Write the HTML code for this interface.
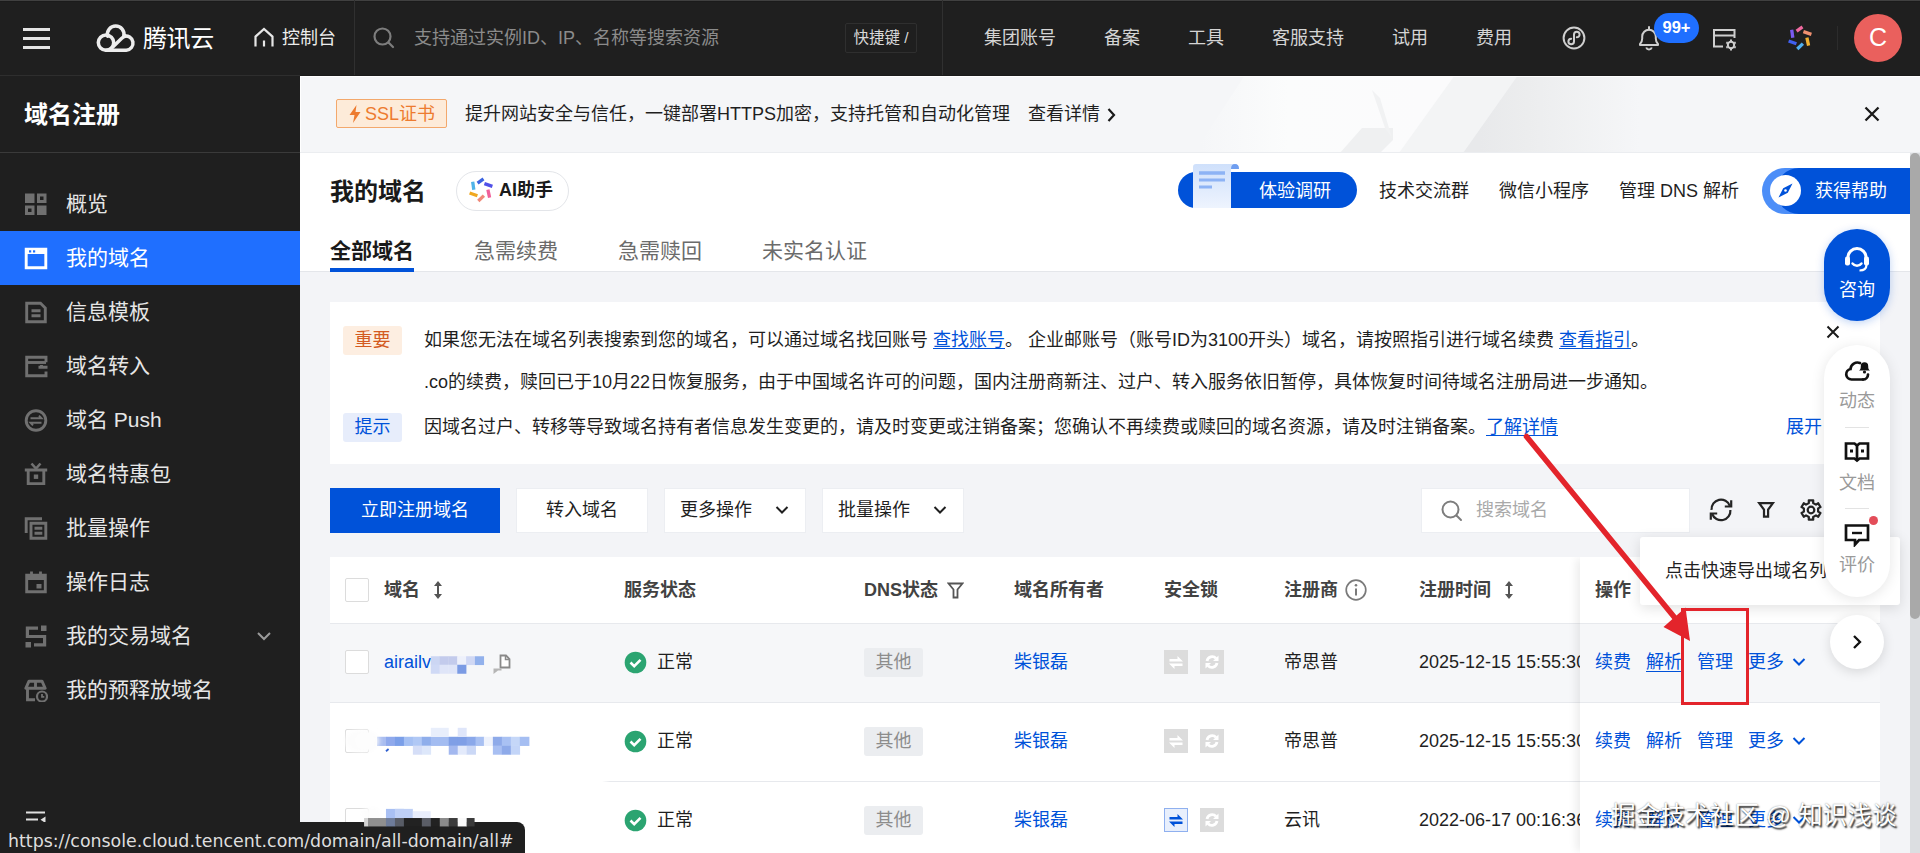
<!DOCTYPE html>
<html lang="zh-CN">
<head>
<meta charset="utf-8">
<title>域名注册 - 我的域名</title>
<style>
*{box-sizing:border-box;margin:0;padding:0}
html,body{width:1920px;height:853px;overflow:hidden;background:#f3f4f7}
body{font-family:"Liberation Sans","Noto Sans CJK SC",sans-serif;font-size:18px;color:#1f1f1f;position:relative}
.abs{position:absolute}
a{color:#0052d9;text-decoration:none}
svg{display:block}
/* ---------- top bar ---------- */
#top{position:absolute;left:0;top:0;width:1920px;height:75px;background:#1f1f1f;color:#d6d6d6;z-index:50}
#top .t{position:absolute;top:1px;line-height:75px;font-size:18px;white-space:nowrap;color:#d4d4d4}
/* ---------- sidebar ---------- */
#side{position:absolute;left:0;top:75px;width:300px;height:778px;background:#1f1f1f;color:#e8e8e8;z-index:40}
#side .ttl{position:absolute;left:24px;top:1px;height:77px;line-height:77px;font-size:24px;font-weight:bold;color:#fff}
#side .ln{position:absolute;left:0;width:300px;height:1px;background:#3a3a3a}
#side .mi{position:absolute;left:0;width:300px;height:54px;line-height:54px;font-size:21px;color:#e6e6e6;padding-left:66px;white-space:nowrap}
#side .mi.on{background:#1f6fff;color:#fff}
#side .mi svg{position:absolute;left:24px;top:15px}
/* ---------- main ---------- */
#main{position:absolute;left:300px;top:75px;width:1610px;height:778px;background:#f3f4f7;overflow:hidden}

/* banner */
#banner{position:absolute;left:300px;top:75px;width:1620px;height:78px;background:#f5f6f8;border-bottom:1px solid #ebedf0;overflow:hidden;z-index:5}
#hdr{position:absolute;left:300px;top:153px;width:1610px;height:119px;background:#fff;border-bottom:1px solid #e4e6ea;z-index:4}
.tab{position:absolute;top:78px;font-size:21px;line-height:40px;color:#6b6b6b;white-space:nowrap}
.tab.on{color:#1a1a1a;font-weight:bold}
.hl{position:absolute;top:18px;line-height:40px;font-size:18px;color:#1f1f1f;white-space:nowrap}

/* notice card */
#notice{position:absolute;left:330px;top:302px;width:1550px;height:162px;background:#fff;z-index:3}
.tag{position:absolute;left:13px;width:59px;height:29px;line-height:29px;text-align:center;font-size:18px;border-radius:3px}
.nt{position:absolute;left:94px;line-height:30px;font-size:18px;color:#1f1f1f;white-space:nowrap}
.nt a{text-decoration:underline;text-underline-offset:2px}
/* toolbar */
.btn{position:absolute;top:488px;height:45px;line-height:43px;font-size:18px;text-align:center;background:#fff;border:1px solid #eceef2;color:#1f1f1f;white-space:nowrap;z-index:3}
/* table */
#tbl{position:absolute;left:330px;top:557px;width:1550px;height:296px;background:#fff;z-index:3;overflow:hidden}
.th{position:absolute;top:0;height:66px;line-height:66px;font-weight:bold;font-size:18px;color:#424242;white-space:nowrap}
.row{position:absolute;left:0;width:1550px;height:79px;border-top:1px solid #e7e9ed}
.td{position:absolute;top:0;height:78px;line-height:76px;font-size:18px;color:#1f1f1f;white-space:nowrap}
.cb{position:absolute;left:15px;width:24px;height:24px;border:1px solid #dcdcdc;background:#fff;border-radius:2px}
.pill{position:absolute;left:534px;top:24px;width:59px;height:29px;line-height:28px;background:#ebedf0;color:#8c8c8c;font-size:18px;text-align:center;border-radius:3px}

#fix{position:absolute;left:1250px;top:0;width:300px;height:296px;background:#fff;box-shadow:-6px 0 8px -2px rgba(0,0,0,0.070)}
</style>
</head>
<body>

<!-- ================= TOP BAR ================= -->
<div id="top">
  <div class="abs" style="left:0;top:0;width:1920px;height:1px;background:#404040"></div><div class="abs" style="left:0;top:1px;width:1920px;height:1px;background:#1b1b1b"></div>
  <!-- hamburger -->
  <div class="abs" style="left:23px;top:28px;width:27px;height:3px;background:#e4e4e4"></div>
  <div class="abs" style="left:23px;top:37px;width:27px;height:3px;background:#e4e4e4"></div>
  <div class="abs" style="left:23px;top:46px;width:27px;height:3px;background:#e4e4e4"></div>
  <!-- cloud logo -->
  <svg class="abs" style="left:95px;top:22px" width="42" height="32" viewBox="95 22 42 32">
    <g fill="none" stroke="#ececec" stroke-width="3.500" stroke-linecap="round" stroke-linejoin="round">
      <circle cx="106" cy="42.600" r="7.700"/>
      <path d="M107.600 36.200 A8.300 8.300 0 1 1 123.800 36.200 A7.200 7.200 0 1 1 126.300 50.300 H106"/>
      <path d="M111.500 48.200 L121.500 38.600 c1.300 -1.200 2.300 -2 3.600 -2.300"/>
    </g>
  </svg>
  <div class="t" style="left:143px;font-size:24px;color:#fff;letter-spacing:-0.4px">腾讯云</div>
  <!-- home -->
  <svg class="abs" style="left:253px;top:27px" width="22" height="21" viewBox="0 0 22 21">
    <path d="M2.5 19.5 V9.6 L11 2 L19.5 9.6 V19.5" fill="none" stroke="#e6e6e6" stroke-width="2.2" stroke-linejoin="miter"/>
    <path d="M11 13.5 V19.5" stroke="#e6e6e6" stroke-width="2.2"/>
  </svg>
  <div class="t" style="left:282px;color:#ececec">控制台</div>
  <div class="abs" style="left:354px;top:0;width:1px;height:75px;background:#303030"></div>
  <!-- search -->
  <svg class="abs" style="left:372px;top:26px" width="24" height="24" viewBox="0 0 24 24">
    <circle cx="10.5" cy="10.5" r="8" fill="none" stroke="#7d7d7d" stroke-width="2.2"/>
    <path d="M16.5 16.5 L21 21" stroke="#7d7d7d" stroke-width="2.2" stroke-linecap="round"/>
  </svg>
  <div class="t" style="left:414px;color:#8b8b8b">支持通过实例ID、IP、名称等搜索资源</div>
  <div class="abs" style="left:845px;top:23px;width:72px;height:30px;border:1px solid #2f2f2f;border-radius:2px;font-size:15.5px;line-height:27px;text-align:center;color:#d8d8d8;white-space:nowrap">快捷键 /</div>
  <div class="abs" style="left:942px;top:0;width:1px;height:75px;background:#303030"></div>
  <div class="t" style="left:984px">集团账号</div>
  <div class="t" style="left:1104px">备案</div>
  <div class="t" style="left:1188px">工具</div>
  <div class="t" style="left:1272px">客服支持</div>
  <div class="t" style="left:1392px">试用</div>
  <div class="t" style="left:1476px">费用</div>
  <!-- mini program icon -->
  <svg class="abs" style="left:1561px;top:25px" width="26" height="26" viewBox="0 0 26 26">
    <circle cx="13" cy="13" r="10.400" fill="none" stroke="#cfcfcf" stroke-width="2"/>
    <path d="M13 16.5 a2.8 2.8 0 1 1 -2.8 -2.8 M13 16.5 V9.5 a2.8 2.8 0 1 1 2.8 2.8" fill="none" stroke="#cfcfcf" stroke-width="2" stroke-linecap="round"/>
  </svg>
  <!-- bell -->
  <svg class="abs" style="left:1637px;top:25px" width="24" height="27" viewBox="0 0 24 27">
    <path d="M3 20 V19 c1.6 -1.4 2.2 -3 2.2 -5.5 V11.5 a6.8 6.8 0 0 1 13.6 0 V13.5 c0 2.500 0.600 4.100 2.200 5.500 V20 Z" fill="none" stroke="#cfcfcf" stroke-width="2" stroke-linejoin="round"/>
    <path d="M9.200 22.500 a3 3 0 0 0 5.600 0" fill="none" stroke="#cfcfcf" stroke-width="2"/>
    <path d="M12 2 V4.500" stroke="#cfcfcf" stroke-width="2" stroke-linecap="round"/>
  </svg>
  <div class="abs" style="left:1654px;top:13px;width:45px;height:30px;border-radius:15px;background:#1f6fff;color:#fff;font-weight:bold;font-size:16.5px;line-height:29px;text-align:center">99+</div>
  <!-- billing icon -->
  <svg class="abs" style="left:1712px;top:27px" width="26" height="24" viewBox="0 0 26 24">
    <path d="M11 19.500 H2 V3 H22.500 V11" fill="none" stroke="#cfcfcf" stroke-width="2"/>
    <path d="M2 8.500 H22.500" stroke="#cfcfcf" stroke-width="2"/>
    <circle cx="19" cy="18" r="3.200" fill="none" stroke="#cfcfcf" stroke-width="2"/>
    <path d="M19 12.600 V14 M19 22 V23.400 M14.300 15.300 L15.600 16 M22.400 20 L23.700 20.700 M14.300 20.700 L15.600 20 M22.400 16 L23.700 15.300" stroke="#cfcfcf" stroke-width="2"/>
  </svg>
  <!-- AI colourful icon -->
  <svg class="abs" style="left:1785.5px;top:24px" width="28" height="28" viewBox="-14 -14 28 28"><g fill="none" stroke-width="3.300" stroke-linecap="butt"><path d="M-8.300 -8.300L-7.200 -0.300" stroke="#7a5af0"/><path d="M-3.400 -6.900L2.500 -11.100" stroke="#f06aa0"/><path d="M3.400 -6.400L11.400 -3.600" stroke="#f09070"/><path d="M6.900 -0.300L8.600 7.700" stroke="#f0b030"/><path d="M2.900 5.600L-2.700 11.000" stroke="#50b0f0"/><path d="M-3.600 5.800L-11.400 3.000" stroke="#4060f0"/></g></svg>
  <div class="abs" style="left:1837px;top:26px;width:1px;height:24px;background:#2c2c2c"></div>
  <div class="abs" style="left:1854px;top:14px;width:48px;height:48px;border-radius:24px;background:#ea605d;color:#fff;font-size:25px;line-height:46px;text-align:center">C</div>
</div>

<!-- ================= SIDEBAR ================= -->
<div id="side">
  <div class="ln" style="top:0;background:#2e2e2e"></div>
  <div class="ttl">域名注册</div>
  <div class="ln" style="top:77px"></div>
  <div class="mi" style="top:102px"><svg width="24" height="24" viewBox="0 0 24 24" fill="none" stroke="#707070" stroke-width="2.900"><g stroke="none" fill="#707070"><rect x="1" y="1.500" width="9.500" height="9.500"/><path fill-rule="evenodd" d="M13 1.500h9.500v9.500H13z M16 4.500v3.500h3.500V4.500z"/><path fill-rule="evenodd" d="M1 13.500h9.500v9.500H1z M4 16.500v3.500h3.500v-3.500z"/><rect x="13" y="13.500" width="9.500" height="9.500"/></g></svg>概览</div>
  <div class="mi on" style="top:156px"><svg width="24" height="24" viewBox="0 0 24 24" fill="none" stroke="#707070" stroke-width="2.900"><path d="M2.200 3.200H21.800V21.800H2.200Z" stroke="#fff"/><path d="M2.200 5.500H21.800" stroke="#fff" stroke-width="5"/><rect x="5" y="4.300" width="2.200" height="2.200" fill="#1f6fff" stroke="none"/><rect x="9" y="4.300" width="2.200" height="2.200" fill="#1f6fff" stroke="none"/></svg>我的域名</div>
  <div class="mi" style="top:210px"><svg width="24" height="24" viewBox="0 0 24 24" fill="none" stroke="#707070" stroke-width="2.900"><path d="M2.700 3.200H16.500L21.300 8V21.800H2.700Z"/><path d="M7.500 10.700H16.500M7.500 15.700H16.500"/></svg>信息模板</div>
  <div class="mi" style="top:264px"><svg width="24" height="24" viewBox="0 0 24 24" fill="none" stroke="#707070" stroke-width="2.900"><path d="M22 8.200V3.200H2.700V21.800H22V17.500"/><path d="M2.700 8.500H22" /><path d="M23.500 13.200H14.500M17.500 13.200V11" /></svg>域名转入</div>
  <div class="mi" style="top:318px"><svg width="24" height="24" viewBox="0 0 24 24" fill="none" stroke="#707070" stroke-width="2.900"><circle cx="12" cy="12.500" r="9.800"/><path d="M6.500 10.300H17.500L15 7.600M17.500 14.700H6.500L9 17.400" stroke-width="2"/></svg>域名 Push</div>
  <div class="mi" style="top:372px"><svg width="24" height="24" viewBox="0 0 24 24" fill="none" stroke="#707070" stroke-width="2.900"><path d="M4.200 9V21.600H19.800V9"/><path d="M0.800 8H23.200" stroke-width="3"/><path d="M7.500 1.500L12 6.500L16.500 1.500" stroke-width="2.600"/><rect x="9.800" y="12.500" width="4.400" height="4.400" fill="#707070" stroke="none"/></svg>域名特惠包</div>
  <div class="mi" style="top:426px"><svg width="24" height="24" viewBox="0 0 24 24" fill="none" stroke="#707070" stroke-width="2.900"><path d="M2.200 17V2.700H18"/><path d="M7 7.200H21.800V22.300H7Z"/><path d="M10.500 12.300H18.300M10.500 17.200H18.300"/></svg>批量操作</div>
  <div class="mi" style="top:480px"><svg width="24" height="24" viewBox="0 0 24 24" fill="none" stroke="#707070" stroke-width="2.900"><path d="M2.700 5.200H21.300V21.800H2.700Z"/><path d="M2.700 7.500H21.300" stroke-width="5"/><path d="M7.500 1.500V6M16.500 1.500V6" stroke-width="2.800"/><rect x="12.500" y="14" width="5" height="4.500" fill="#707070" stroke="none"/></svg>操作日志</div>
  <div class="mi" style="top:534px"><svg width="24" height="24" viewBox="0 0 24 24" fill="none" stroke="#707070" stroke-width="2.900"><path d="M14 4.200H3.400V12.500H20.600V20.800H10" stroke-width="3.200"/><rect x="17" y="1.500" width="5.500" height="5.500" fill="#707070" stroke="none"/><rect x="1.500" y="18" width="5.500" height="5.500" fill="#707070" stroke="none"/></svg>我的交易域名</div>
  <div class="mi" style="top:588px"><svg width="24" height="24" viewBox="0 0 24 24" fill="none" stroke="#707070" stroke-width="2.900"><path d="M11 21.800H3.500V10.500"/><path d="M1.800 10.300L5 3.200H18L21.200 10.300Z" stroke-linejoin="round"/><path d="M11.500 3.500V10"/><circle cx="18" cy="18.500" r="5" stroke-width="2.200"/><path d="M18 16V18.800H20.300" stroke-width="1.800"/></svg>我的预释放域名</div>
  <svg class="abs" style="left:256px;top:555px" width="16" height="12" viewBox="0 0 16 12"><path d="M2 3L8 9L14 3" fill="none" stroke="#9a9a9a" stroke-width="2"/></svg>
  <svg class="abs" style="left:25px;top:735px" width="24" height="16" viewBox="0 0 24 16"><path d="M1 2.500H20M1 9.500H13" stroke="#e0e0e0" stroke-width="2.200"/><path d="M20.500 6.500V13L15.500 9.800Z" fill="#e0e0e0"/></svg>
</div>

<!-- ================= MAIN ================= -->
<div id="main">
</div>

<!-- banner -->
<div id="banner">
  <svg class="abs" style="left:0;top:0" width="1620" height="78" viewBox="300 75 1620 78">
    <defs>
      <linearGradient id="bgA" gradientUnits="userSpaceOnUse" x1="1200" y1="0" x2="1420" y2="0"><stop offset="0" stop-color="#f5f6f8"/><stop offset="0.400" stop-color="#fbfcfc"/><stop offset="1" stop-color="#fbfbfc"/></linearGradient>
      <linearGradient id="bgB" gradientUnits="userSpaceOnUse" x1="1480" y1="0" x2="1640" y2="0"><stop offset="0" stop-color="#e8e9eb"/><stop offset="0.300" stop-color="#ecedee"/><stop offset="1" stop-color="#f5f6f8"/></linearGradient>
    </defs>
    <path d="M1194 153 L1245 75 L1518 75 L1463 153Z" fill="url(#bgA)"/>
    <path d="M1399 153 L1455 75 L1518 75 L1463 153Z" fill="#f3f4f5"/>
    <path d="M1463 153 L1518 75 L1660 75 L1660 153Z" fill="url(#bgB)"/>
    <path d="M1340 153 L1362 128 L1393 128 L1393 140 L1380 153Z" fill="#eff0f1"/>
    <path d="M1372 90 L1380 98 L1392 138 L1385 128Z" fill="#f1f2f3"/>
  </svg>
  <div class="abs" style="left:0;top:0;width:1620px;height:1px;background:#1b1b1b"></div>
  <div class="abs" style="left:0;top:1px;width:1620px;height:1px;background:#fff"></div>
  <div class="abs" style="left:0;top:1px;width:1px;height:77px;background:#fff"></div>
  <div class="abs" style="left:36px;top:24px;width:111px;height:29px;border:1px solid #f3a86c;background:#fdebd9;border-radius:2px"></div>
  <svg class="abs" style="left:48px;top:29px" width="14" height="20" viewBox="0 0 14 20"><path d="M8.500 1L1.500 11H6.500L5 19L12.500 8H7.500Z" fill="#ed7b2f"/></svg>
  <div class="abs" style="left:65px;top:19px;line-height:40px;font-size:18px;color:#ed7b2f;white-space:nowrap">SSL证书</div>
  <div class="abs" style="left:165px;top:19px;line-height:40px;font-size:18px;color:#1f1f1f;white-space:nowrap">提升网站安全与信任，一键部署HTTPS加密，支持托管和自动化管理</div>
  <div class="abs" style="left:728px;top:19px;line-height:40px;font-size:18px;color:#1f1f1f;white-space:nowrap">查看详情</div>
  <svg class="abs" style="left:1564px;top:31px" width="16" height="16" viewBox="0 0 16 16"><path d="M1.500 1.500L14.500 14.500M14.500 1.500L1.500 14.500" stroke="#1a1a1a" stroke-width="2.300"/></svg>
  <svg class="abs" style="left:806px;top:32px" width="10" height="16" viewBox="0 0 10 16"><path d="M2.500 2L8 8L2.500 14" fill="none" stroke="#1a1a1a" stroke-width="2.200"/></svg>
</div>

<!-- page header -->
<div id="hdr">
  <div class="abs" style="left:30px;top:17px;line-height:44px;font-size:24px;font-weight:bold;color:#1a1a1a;white-space:nowrap">我的域名</div>
  <div class="abs" style="left:156px;top:18px;width:113px;height:40px;border:1px solid #e3e5e9;border-radius:20px;background:#fff"></div>
  <svg class="abs" style="left:167px;top:23px" width="28" height="28" viewBox="-14 -14 28 28"><g fill="none" stroke-width="3.300" stroke-linecap="butt"><path d="M-8.300 -8.300L-7.200 -0.300" stroke="#4fb3e8"/><path d="M-3.400 -6.900L2.500 -11.100" stroke="#3b63e0"/><path d="M3.400 -6.400L11.400 -3.600" stroke="#5050e8"/><path d="M6.900 -0.300L8.600 7.700" stroke="#f0609a"/><path d="M2.900 5.600L-2.700 11.000" stroke="#f08878"/><path d="M-3.600 5.800L-11.400 3.000" stroke="#f0a820"/></g></svg>
  <div class="abs" style="left:199px;top:17px;line-height:40px;font-size:18px;font-weight:bold;color:#1a1a1a;white-space:nowrap">AI助手</div>


  <!-- header right links -->
  <div class="abs" style="left:878px;top:19px;width:179px;height:36px;border-radius:18px;background:#0052d9"></div>
  <svg class="abs" style="left:890px;top:9px" width="52" height="48" viewBox="0 0 52 48">
    <defs><linearGradient id="pp" x1="0" y1="0" x2="0" y2="1"><stop offset="0" stop-color="#cfe0fb"/><stop offset="1" stop-color="#eef4fe"/></linearGradient></defs>
    <path d="M3 5 Q3 2 6 2 H44 Q49 2 49 7 H41 V46 H3Z" fill="url(#pp)"/>
    <path d="M41 7 Q41 2 45 2 Q49 2 49 7Z" fill="#6f9ef0"/>
    <path d="M9 11H35" stroke="#8db3f5" stroke-width="3.500"/><path d="M9 18H35" stroke="#8db3f5" stroke-width="3"/><path d="M9 25H22" stroke="#8db3f5" stroke-width="3"/>
  </svg>
  <div class="hl" style="left:959px;color:#fff">体验调研</div>
  <div class="hl" style="left:1079px">技术交流群</div>
  <div class="hl" style="left:1199px">微信小程序</div>
  <div class="hl" style="left:1319px">管理 DNS 解析</div>
  <!-- get help -->
  <div class="abs" style="left:1462px;top:15px;width:148px;height:46px;border-radius:23px 0 0 23px;background:#4c8ef8"></div>
  <div class="abs" style="left:1476px;top:15px;width:134px;height:46px;border-radius:23px 0 0 23px;background:#0052d9"></div>
  <div class="abs" style="left:1470px;top:22px;width:31px;height:31px;border-radius:16px;background:#fff"></div>
  <svg class="abs" style="left:1476px;top:28px" width="19" height="19" viewBox="0 0 19 19"><path d="M16.500 2.500L11.800 11.800L2.500 16.500L7.200 7.200Z" fill="#0052d9"/><circle cx="9.500" cy="9.500" r="1.300" fill="#fff"/></svg>
  <div class="hl" style="left:1515px;color:#fff">获得帮助</div>
  <div class="tab on" style="left:30px">全部域名</div>
  <div class="abs" style="left:30px;top:115px;width:84px;height:4px;background:#0052d9"></div>
  <div class="tab" style="left:174px">急需续费</div>
  <div class="tab" style="left:318px">急需赎回</div>
  <div class="tab" style="left:462px">未实名认证</div>
</div>


<!-- notice -->
<div id="notice">
  <div class="tag" style="top:24px;background:#fdeee1;color:#d35a21">重要</div>
  <div class="nt" style="top:23px">如果您无法在域名列表搜索到您的域名，可以通过域名找回账号 <a>查找账号</a>。 企业邮账号（账号ID为3100开头）域名，请按照指引进行域名续费 <a>查看指引</a>。</div>
  <div class="nt" style="top:65px">.co的续费，赎回已于10月22日恢复服务，由于中国域名许可的问题，国内注册商新注、过户、转入服务依旧暂停，具体恢复时间待域名注册局进一步通知。</div>
  <div class="tag" style="top:111px;background:#e7edfb;color:#0052d9">提示</div>
  <div class="nt" style="top:110px">因域名过户、转移等导致域名持有者信息发生变更的，请及时变更或注销备案；您确认不再续费或赎回的域名资源，请及时注销备案。<a>了解详情</a></div>
  <div class="abs" style="left:1456px;top:110px;line-height:30px;font-size:18px;color:#0052d9;white-space:nowrap">展开</div>
</div>

<!-- toolbar -->
<div class="btn" style="left:330px;width:170px;background:#0052d9;border-color:#0052d9;color:#fff">立即注册域名</div>
<div class="btn" style="left:516px;width:132px">转入域名</div>
<div class="btn" style="left:664px;width:142px;text-align:left;padding-left:15px">更多操作<svg class="abs" style="left:109px;top:15px" width="16" height="12" viewBox="0 0 16 12"><path d="M2.500 3L8 8.500L13.500 3" fill="none" stroke="#1f1f1f" stroke-width="2"/></svg></div>
<div class="btn" style="left:822px;width:142px;text-align:left;padding-left:15px">批量操作<svg class="abs" style="left:109px;top:15px" width="16" height="12" viewBox="0 0 16 12"><path d="M2.500 3L8 8.500L13.500 3" fill="none" stroke="#1f1f1f" stroke-width="2"/></svg></div>
<div class="btn" style="left:1421px;width:269px;text-align:left;padding-left:54px;color:#a9a9a9">搜索域名<svg class="abs" style="left:18px;top:10px" width="24" height="24" viewBox="0 0 24 24"><circle cx="10.500" cy="10.500" r="8" fill="none" stroke="#7d7d7d" stroke-width="2"/><path d="M16.500 16.500L21 21" stroke="#7d7d7d" stroke-width="2" stroke-linecap="round"/></svg></div>
<!-- toolbar icons -->
<svg class="abs" style="left:1700px;top:490px;z-index:3" width="130" height="40" viewBox="1700 490 130 40">
  <g fill="none" stroke="#242424" stroke-width="2.200">
    <path d="M1711.600 509.800 A9.400 9.400 0 0 1 1729.800 505.800"/>
    <path d="M1731.200 500.200 V506.500 H1724.800"/>
    <path d="M1730.400 510 A9.400 9.400 0 0 1 1712.200 514"/>
    <path d="M1710.800 519.700 V513.500 H1717.200"/>
    <path d="M1759.200 503.200 H1772.900 L1768.100 509.700 V516.600 H1764 V509.700 Z" stroke-linejoin="miter"/>
    <path d="M1808.866 503.019 L1808.773 500.354 L1813.227 500.354 L1813.134 503.019 L1815.979 504.661 L1818.240 503.248 L1820.467 507.106 L1818.113 508.358 L1818.113 511.642 L1820.467 512.894 L1818.240 516.752 L1815.979 515.339 L1813.134 516.981 L1813.227 519.646 L1808.773 519.646 L1808.866 516.981 L1806.021 515.339 L1803.760 516.752 L1801.533 512.894 L1803.887 511.642 L1803.887 508.358 L1801.533 507.106 L1803.760 503.248 L1806.021 504.661Z" stroke-linejoin="round"/>
    <circle cx="1811" cy="510" r="3.300"/>
  </g>
</svg>

<!-- table -->
<div id="tbl">
  <div class="cb" style="top:21px"></div>
  <div class="th" style="left:54px">域名</div><svg class="abs" style="left:103px;top:24px" width="10" height="18" viewBox="0 0 10 18"><path d="M5 2V16" stroke="#555" stroke-width="2"/><path d="M5 0L9 5H1Z M5 18L9 13H1Z" fill="#555"/></svg>
  <div class="th" style="left:294px">服务状态</div>
  <div class="th" style="left:534px">DNS状态</div><svg class="abs" style="left:617px;top:25px" width="17" height="17" viewBox="0 0 17 17"><path d="M1.500 1.500H15.500L10.500 7.500V15.500H6.500V7.500Z" fill="none" stroke="#555" stroke-width="1.800"/></svg>
  <div class="th" style="left:684px">域名所有者</div>
  <div class="th" style="left:834px">安全锁</div>
  <div class="th" style="left:954px">注册商</div><svg class="abs" style="left:1015px;top:22px" width="22" height="22" viewBox="0 0 22 22"><circle cx="11" cy="11" r="9.800" fill="none" stroke="#7a7a7a" stroke-width="1.700"/><path d="M11 9.500V16.500" stroke="#7a7a7a" stroke-width="2"/><circle cx="11" cy="6.300" r="1.300" fill="#7a7a7a"/></svg>
  <div class="th" style="left:1089px">注册时间</div><svg class="abs" style="left:1174px;top:24px" width="10" height="18" viewBox="0 0 10 18"><path d="M5 2V16" stroke="#555" stroke-width="2"/><path d="M5 0L9 5H1Z M5 18L9 13H1Z" fill="#555"/></svg>
  <div class="row" style="top:66px;background:#f6f7f9;">
  <div class="cb" style="top:26px"></div>
  <div class="td" style="left:54px;color:#0052d9">airailv</div>
  <svg class="abs" style="left:163px;top:30px" width="18" height="21" viewBox="0 0 18 21"><path d="M7.500 1.500H13L16.500 5V13.500H7.500Z" fill="#fff" stroke="#8a8a8a" stroke-width="1.800"/><path d="M12.500 1.500V5.500H16.500" fill="none" stroke="#8a8a8a" stroke-width="1.500"/><path d="M0.500 20V14.500H8.500V16.500H5Z" fill="#b5b5b5"/></svg>
  <svg class="abs" style="left:294px;top:27px" width="23" height="23" viewBox="0 0 23 23"><circle cx="11.500" cy="11.500" r="10.800" fill="#2ba471"/><path d="M6.500 11.500L10.200 15.200L16.500 8.800" fill="none" stroke="#fff" stroke-width="2.600"/></svg>
  <div class="td" style="left:327px">正常</div>
  <div class="pill">其他</div>
  <div class="td" style="left:684px;color:#0052d9">柴银磊</div>
  <div class="abs" style="left:834px;top:26px;width:24px;height:24px;background:#dcdcdc;"><svg width="24" height="24" viewBox="0 0 24 24" style="position:absolute;left:0px;top:0px"><path d="M5.500 9H13.500V6L19 11.500H5.500Z M18.500 13.500V16H10.500V19L5 13.500Z" fill="#fff"/></svg></div>
  <div class="abs" style="left:870px;top:26px;width:24px;height:24px;background:#dcdcdc;"><svg width="24" height="24" viewBox="0 0 24 24" style="position:absolute;left:0px;top:0px"><path d="M7 11a5.200 5.200 0 0 1 9 -2.600M17 13a5.200 5.200 0 0 1 -9 2.600" fill="none" stroke="#fff" stroke-width="2.800"/><path d="M18.500 5.500V11H13Z M5.500 18.500V13H11Z" fill="#fff"/></svg></div>
  <div class="td" style="left:954px">帝思普</div>
  <div class="td" style="left:1089px">2025-12-15 15:55:30</div>
  </div>
  <div class="row" style="top:145px;">
  <div class="cb" style="top:26px"></div>
  <svg class="abs" style="left:294px;top:27px" width="23" height="23" viewBox="0 0 23 23"><circle cx="11.500" cy="11.500" r="10.800" fill="#2ba471"/><path d="M6.500 11.500L10.200 15.200L16.500 8.800" fill="none" stroke="#fff" stroke-width="2.600"/></svg>
  <div class="td" style="left:327px">正常</div>
  <div class="pill">其他</div>
  <div class="td" style="left:684px;color:#0052d9">柴银磊</div>
  <div class="abs" style="left:834px;top:26px;width:24px;height:24px;background:#dcdcdc;"><svg width="24" height="24" viewBox="0 0 24 24" style="position:absolute;left:0px;top:0px"><path d="M5.500 9H13.500V6L19 11.500H5.500Z M18.500 13.500V16H10.500V19L5 13.500Z" fill="#fff"/></svg></div>
  <div class="abs" style="left:870px;top:26px;width:24px;height:24px;background:#dcdcdc;"><svg width="24" height="24" viewBox="0 0 24 24" style="position:absolute;left:0px;top:0px"><path d="M7 11a5.200 5.200 0 0 1 9 -2.600M17 13a5.200 5.200 0 0 1 -9 2.600" fill="none" stroke="#fff" stroke-width="2.800"/><path d="M18.500 5.500V11H13Z M5.500 18.500V13H11Z" fill="#fff"/></svg></div>
  <div class="td" style="left:954px">帝思普</div>
  <div class="td" style="left:1089px">2025-12-15 15:55:30</div>
  </div>
  <div class="row" style="top:224px;">
  <div class="cb" style="top:26px"></div>
  <svg class="abs" style="left:294px;top:27px" width="23" height="23" viewBox="0 0 23 23"><circle cx="11.500" cy="11.500" r="10.800" fill="#2ba471"/><path d="M6.500 11.500L10.200 15.200L16.500 8.800" fill="none" stroke="#fff" stroke-width="2.600"/></svg>
  <div class="td" style="left:327px">正常</div>
  <div class="pill">其他</div>
  <div class="td" style="left:684px;color:#0052d9">柴银磊</div>
  <div class="abs" style="left:834px;top:26px;width:24px;height:24px;background:#e8effc;border:1px solid #8fb0ef;"><svg width="24" height="24" viewBox="0 0 24 24" style="position:absolute;left:-1px;top:-1px"><path d="M5.500 9H13.500V6L19 11.500H5.500Z M18.500 13.500V16H10.500V19L5 13.500Z" fill="#0052d9"/></svg></div>
  <div class="abs" style="left:870px;top:26px;width:24px;height:24px;background:#dcdcdc;"><svg width="24" height="24" viewBox="0 0 24 24" style="position:absolute;left:0px;top:0px"><path d="M7 11a5.200 5.200 0 0 1 9 -2.600M17 13a5.200 5.200 0 0 1 -9 2.600" fill="none" stroke="#fff" stroke-width="2.800"/><path d="M18.500 5.500V11H13Z M5.500 18.500V13H11Z" fill="#fff"/></svg></div>
  <div class="td" style="left:954px">云讯</div>
  <div class="td" style="left:1089px">2022-06-17 00:16:36</div>
  </div>
  <div id="fix">
    <div class="th" style="left:15px">操作</div>
    <div class="row" style="top:66px;width:300px;background:#f6f7f9"><div class="td" style="left:15px;color:#0052d9">续费</div><div class="td" style="left:66px;color:#0052d9;text-decoration:underline;text-underline-offset:3px;">解析</div><div class="td" style="left:117px;color:#0052d9">管理</div><div class="td" style="left:168px;color:#0052d9">更多</div><svg class="abs" style="left:211px;top:32px" width="16" height="12" viewBox="0 0 16 12"><path d="M2.500 3L8 8.500L13.500 3" fill="none" stroke="#0052d9" stroke-width="2"/></svg></div>
    <div class="row" style="top:145px;width:300px;background:#fff"><div class="td" style="left:15px;color:#0052d9">续费</div><div class="td" style="left:66px;color:#0052d9;">解析</div><div class="td" style="left:117px;color:#0052d9">管理</div><div class="td" style="left:168px;color:#0052d9">更多</div><svg class="abs" style="left:211px;top:32px" width="16" height="12" viewBox="0 0 16 12"><path d="M2.500 3L8 8.500L13.500 3" fill="none" stroke="#0052d9" stroke-width="2"/></svg></div>
    <div class="row" style="top:224px;width:300px;background:#fff"><div class="td" style="left:15px;color:#0052d9">续费</div><div class="td" style="left:66px;color:#0052d9;">解析</div><div class="td" style="left:117px;color:#0052d9">管理</div><div class="td" style="left:168px;color:#0052d9">更多</div><svg class="abs" style="left:211px;top:32px" width="16" height="12" viewBox="0 0 16 12"><path d="M2.500 3L8 8.500L13.500 3" fill="none" stroke="#0052d9" stroke-width="2"/></svg></div>
  </div>
</div>

<!-- scrollbar -->
<div class="abs" style="left:1910px;top:153px;width:10px;height:700px;background:#dcdee1;z-index:30"></div>
<div class="abs" style="left:1910px;top:153px;width:10px;height:466px;background:#a9a9a9;border-radius:5px 5px 5px 5px;z-index:31"></div>

<!-- popover -->
<div class="abs" style="left:1640px;top:537px;width:260px;height:68px;background:#fff;box-shadow:0 3px 14px rgba(0,0,0,0.120);border-radius:3px;z-index:20"></div>
<div class="abs" style="left:1665px;top:556px;line-height:30px;font-size:18px;color:#1f1f1f;white-space:nowrap;z-index:21">点击快速导出域名列</div>

<!-- consult pill -->
<div class="abs" style="left:1824px;top:229px;width:66px;height:92px;border-radius:33px;background:#0052d9;z-index:24;box-shadow:0 2px 8px rgba(0,82,217,0.250)"></div>
<svg class="abs" style="left:1843px;top:245px;z-index:25" width="28" height="30" viewBox="0 0 28 30">
  <path d="M5 17V12.500a9 9 0 0 1 18 0V17" fill="none" stroke="#fff" stroke-width="3"/>
  <rect x="2" y="11.500" width="5" height="9" rx="2" fill="#fff"/><rect x="21" y="11.500" width="5" height="9" rx="2" fill="#fff"/>
  <path d="M9.500 18.500c1.200 1.600 2.800 2.300 4.500 2.300s3.300 -0.700 4.500 -2.300" fill="none" stroke="#fff" stroke-width="2.400" stroke-linecap="round"/>
  <path d="M23.500 19.500c0 4 -3 6 -7 6" fill="none" stroke="#fff" stroke-width="2.200"/>
</svg>
<div class="abs" style="left:1839px;top:275px;line-height:30px;font-size:18px;color:#fff;white-space:nowrap;z-index:25">咨询</div>
<svg class="abs" style="left:1826px;top:325px;z-index:25" width="14" height="14" viewBox="0 0 14 14"><path d="M1.500 1.500L12.500 12.500M12.500 1.500L1.500 12.500" stroke="#1a1a1a" stroke-width="2"/></svg>

<!-- floating tool panel -->
<div class="abs" style="left:1824px;top:345px;width:66px;height:252px;border-radius:33px;background:#fff;box-shadow:0 2px 14px rgba(0,0,0,0.100);z-index:24"></div>
<svg class="abs" style="left:1843px;top:358px;z-index:25" width="28" height="24" viewBox="0 0 28 24">
  <path d="M20 21.500H8.500a5.300 5.300 0 0 1 -1 -10.500a7 7 0 0 1 9.500 -6" fill="none" stroke="#111" stroke-width="2.700" stroke-linecap="round"/>
  <path d="M20 21.500a5 5 0 0 0 5 -5" fill="none" stroke="#111" stroke-width="2.700" stroke-linecap="round"/>
  <path d="M16 12.500c1.600 -1 1.800 -2.500 1.800 -4.500a3.700 3.700 0 0 1 7.400 0c0 2 0.200 3.500 1.800 4.500Z" fill="#111"/><circle cx="21.500" cy="14" r="1.600" fill="#111"/>
</svg>
<div class="abs" style="left:1839px;top:386px;line-height:30px;font-size:18px;color:#9a9a9a;white-space:nowrap;z-index:25">动态</div>
<div class="abs" style="left:1845px;top:427px;width:24px;height:1px;background:#e3e3e3;z-index:25"></div>
<svg class="abs" style="left:1844px;top:441px;z-index:25" width="26" height="22" viewBox="0 0 26 22">
  <path d="M2 2.500H10.500L13 4.500L15.500 2.500H24V17.500H15.500L13 19.500L10.500 17.500H2Z" fill="none" stroke="#111" stroke-width="2.700" stroke-linejoin="miter"/>
  <path d="M13 4.500V19" stroke="#111" stroke-width="2.700"/>
  <rect x="6" y="8.500" width="3" height="3" fill="#111"/><rect x="17" y="8.500" width="3" height="3" fill="#111"/>
</svg>
<div class="abs" style="left:1839px;top:468px;line-height:30px;font-size:18px;color:#9a9a9a;white-space:nowrap;z-index:25">文档</div>
<div class="abs" style="left:1845px;top:508px;width:24px;height:1px;background:#e3e3e3;z-index:25"></div>
<svg class="abs" style="left:1844px;top:523px;z-index:25" width="26" height="24" viewBox="0 0 26 24">
  <path d="M2 2.500H24V17H15L11 21.500V17H2Z" fill="none" stroke="#111" stroke-width="2.700" stroke-linejoin="miter"/>
  <path d="M8 10H18" stroke="#111" stroke-width="2.400"/>
</svg>
<div class="abs" style="left:1869px;top:516px;width:9px;height:9px;border-radius:5px;background:#e34d59;z-index:26"></div>
<div class="abs" style="left:1839px;top:550px;line-height:30px;font-size:18px;color:#9a9a9a;white-space:nowrap;z-index:25">评价</div>

<!-- round next button -->
<div class="abs" style="left:1830px;top:615px;width:54px;height:54px;border-radius:27px;background:#fff;box-shadow:0 3px 12px rgba(0,0,0,0.130);z-index:24"></div>
<svg class="abs" style="left:1851px;top:634px;z-index:25" width="12" height="16" viewBox="0 0 12 16"><path d="M3 2L9 8L3 14" fill="none" stroke="#111" stroke-width="2.300"/></svg>

<!-- annotation: red arrow + box -->
<svg class="abs" style="left:0;top:0;z-index:60;pointer-events:none" width="1920" height="853" viewBox="0 0 1920 853">
  <path d="M1526.500 436.500L1675 618" stroke="#e3242b" stroke-width="5.500" stroke-linecap="round"/>
  <path d="M1690 641L1663.500 627L1685.500 607.500Z" fill="#e3242b"/>
  <rect x="1682.500" y="609.500" width="65" height="94" fill="none" stroke="#e3242b" stroke-width="3"/>
</svg>

<!-- mosaic -->
<svg class="abs" style="left:0;top:0;z-index:72;pointer-events:none" width="1920" height="853" viewBox="0 0 1920 853"><defs><filter id="blur2"><feGaussianBlur stdDeviation="2.500"/></filter><linearGradient id="fadeW" x1="0" y1="0" x2="1" y2="0"><stop offset="0" stop-color="#fff"/><stop offset="1" stop-color="#fff" stop-opacity="0"/></linearGradient></defs><rect x="430.800" y="656.250" width="9.125" height="8.800" fill="#ccd6f3"/><rect x="439.625" y="656.250" width="9.125" height="8.800" fill="#c3cbec"/><rect x="448.450" y="656.250" width="9.125" height="8.800" fill="#c3cbec"/><rect x="457.275" y="656.250" width="9.125" height="8.800" fill="#eef1fb"/><rect x="466.100" y="656.250" width="9.125" height="8.800" fill="#d0d8f4"/><rect x="474.925" y="656.250" width="9.125" height="8.800" fill="#92b1ec"/><rect x="430.800" y="664.750" width="9.125" height="9.000" fill="#cfd9f5"/><rect x="439.625" y="664.750" width="9.125" height="9.000" fill="#dfe5f8"/><rect x="448.450" y="664.750" width="9.125" height="9.000" fill="#dfe5f8"/><rect x="457.275" y="664.750" width="9.125" height="9.000" fill="#7b9be4"/><rect x="376.996" y="736.771" width="9.269" height="9.169" fill="#a9bdf0"/><rect x="385.964" y="736.771" width="9.269" height="9.169" fill="#8fa9ec"/><rect x="394.933" y="736.771" width="9.269" height="9.169" fill="#7b9fe8"/><rect x="403.901" y="736.771" width="9.269" height="9.169" fill="#a5c0f3"/><rect x="412.870" y="736.771" width="9.269" height="9.169" fill="#b0c8f5"/><rect x="421.839" y="736.771" width="9.269" height="9.169" fill="#8faeeb"/><rect x="430.807" y="736.771" width="9.269" height="9.169" fill="#a3bcf1"/><rect x="439.776" y="736.771" width="9.269" height="9.169" fill="#a3bcf1"/><rect x="448.744" y="736.771" width="9.269" height="9.169" fill="#7f9fe6"/><rect x="457.713" y="736.771" width="9.269" height="9.169" fill="#7f9fe6"/><rect x="466.682" y="736.771" width="9.269" height="9.169" fill="#8aa8ea"/><rect x="475.650" y="736.771" width="8.551" height="9.169" fill="#a8c0f2"/><rect x="483.901" y="736.771" width="9.269" height="9.169" fill="#eef2fc"/><rect x="492.870" y="736.771" width="9.269" height="9.169" fill="#8eaae9"/><rect x="501.839" y="736.771" width="9.269" height="9.169" fill="#a9c1f3"/><rect x="510.807" y="736.771" width="9.269" height="9.169" fill="#c5d7f8"/><rect x="519.776" y="736.771" width="9.627" height="9.169" fill="#a5bef2"/><rect x="430.807" y="727.803" width="17.937" height="9.169" fill="#e8eefb"/><rect x="457.713" y="727.803" width="8.969" height="9.169" fill="#dfe6fa"/><rect x="412.870" y="745.740" width="9.269" height="8.969" fill="#d5def7"/><rect x="421.839" y="745.740" width="9.269" height="8.969" fill="#dde7fa"/><rect x="448.744" y="745.740" width="9.269" height="8.969" fill="#a3b8ef"/><rect x="457.713" y="745.740" width="9.269" height="8.969" fill="#e3eafb"/><rect x="466.682" y="745.740" width="9.269" height="8.969" fill="#cbd8f6"/><rect x="492.870" y="745.740" width="9.269" height="8.969" fill="#a8bff2"/><rect x="501.839" y="745.740" width="9.269" height="8.969" fill="#8eaae9"/><rect x="510.807" y="745.740" width="9.269" height="8.969" fill="#c3d5f8"/><rect x="330" y="779" width="272" height="5" fill="#fff"/><rect x="602" y="779" width="8" height="5" fill="url(#fadeW)"/><ellipse cx="362" cy="741" rx="17" ry="11" fill="#fcfcfc" filter="url(#blur2)"/><ellipse cx="365" cy="741" rx="10" ry="9" fill="#fdfdfd"/><path d="M386 751.200L388.600 749" stroke="#2f5fd0" stroke-width="1.800"/><rect x="385.964" y="808.879" width="17.937" height="9.148" fill="#a9c0f3"/><rect x="394.933" y="808.879" width="17.937" height="9.148" fill="#bfd0f6"/><rect x="412.870" y="811.211" width="17.937" height="6.816" fill="#e9eefc"/><ellipse cx="372" cy="814" rx="10" ry="7" fill="#fdfdfd" filter="url(#blur2)"/><rect x="364.081" y="818.027" width="4.146" height="8.430" fill="#d4d4d4"/><rect x="368.027" y="818.027" width="18.137" height="8.430" fill="#8f8f8f"/><rect x="385.964" y="818.027" width="9.169" height="8.430" fill="#6e7c9a"/><rect x="394.933" y="818.027" width="9.169" height="8.430" fill="#585c66"/><rect x="403.901" y="818.027" width="18.137" height="8.430" fill="#222222"/><rect x="421.839" y="818.027" width="9.169" height="8.430" fill="#5a5d66"/><rect x="430.807" y="818.027" width="9.169" height="8.430" fill="#222222"/><rect x="439.776" y="818.027" width="9.169" height="8.430" fill="#8a8a8a"/><rect x="448.744" y="818.027" width="9.169" height="8.430" fill="#3c3c3c"/><rect x="457.713" y="818.027" width="9.169" height="8.430" fill="#fafafa"/><rect x="466.682" y="818.027" width="7.913" height="8.430" fill="#3a3a3a"/></svg>

<!-- watermark -->
<div class="abs" style="left:1611px;top:796px;line-height:40px;font-size:24.700px;color:#fff;white-space:nowrap;z-index:61;text-shadow:1.500px 1.500px 1.500px rgba(0,0,0,0.800),0 0 1.500px rgba(0,0,0,0.500)">掘金技术社区 @ 知识浅谈</div>

<!-- status bubble -->
<div class="abs" style="left:0;top:822px;width:525px;height:31px;background:#1f1f1f;border-top-right-radius:8px;z-index:70;color:#dedede;font-size:17.400px;line-height:38px;padding-left:8px;white-space:nowrap;font-family:'DejaVu Sans','Liberation Sans',sans-serif">https://console.cloud.tencent.com/domain/all-domain/all#</div>

</body>
</html>
